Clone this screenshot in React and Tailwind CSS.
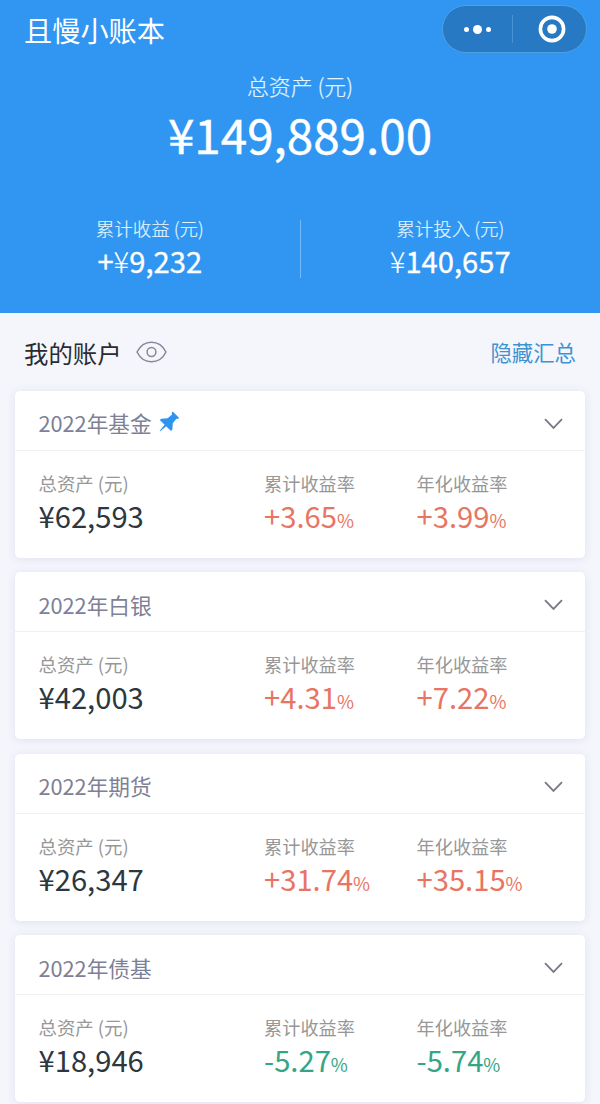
const accounts = [
    { name: "2022年基金", pinned: true, total: "¥62,593", profit: "+3.65", yearly: "+3.99" },
    { name: "2022年白银", total: "¥42,003", profit: "+4.31", yearly: "+7.22" },
    { name: "2022年期货", total: "¥26,347", profit: "+31.74", yearly: "+35.15" },
    { name: "2022年债基", total: "¥18,946", profit: "-5.27", yearly: "-5.74" },
];

function Capsule () {
    return (
        <div className="mt-[5px] flex h-12 w-[145px] items-center rounded-full border border-[#4f9fe2] bg-[#2679c2]">
            <div className="flex flex-1 items-center justify-center gap-1">
                <span className="size-[5px] rounded-full bg-white"></span>
                <span className="size-[9px] rounded-full bg-white"></span>
                <span className="size-[5px] rounded-full bg-white"></span>
            </div>
            <div className="h-7 w-px bg-[#4a92d2]"></div>
            <div className="flex flex-1 items-center justify-center pl-1">
                <svg width="28" height="28" viewBox="0 0 28 28">
                    <circle cx="14" cy="14" r="11.6" fill="none" stroke="white" strokeWidth="3.6" />
                    <circle cx="14" cy="14" r="4.8" fill="white" />
                </svg>
            </div>
        </div>
    )
}

function Eye () {
    return (
        <svg className="ml-[14px]" width="31" height="24" viewBox="0 0 31 24" fill="none" stroke="#85869a" strokeWidth="1.5">
            <path d="M1 12C4 6 9.500 2.200 15.500 2.200S27 6 30 12C27 18 21.500 21.800 15.500 21.800S4 18 1 12Z" strokeLinejoin="round" />
            <circle cx="15.500" cy="12" r="4.400" />
        </svg>
    )
}

function Pin () {
    return (
        <svg className="mb-1 ml-[7px]" width="21" height="21" viewBox="0 0 21 21" fill="#2f94f0">
            <path d="M13.700 0.600L20.200 7L18.700 8.100L17.400 7.800L13.800 12.200L13.400 18.200L12 20L7.200 15.300L1.200 20.200L0.700 19.700L5.600 13.700L0.800 9.100L2.300 7.700L8.600 7.200L13.100 3.500L12.700 1.800Z" />
        </svg>
    )
}

function Rate ({ label, value }) {
    return (
        <div>
            <p className="text-[18.2px] leading-[26px] text-[#979797]">{label}</p>
            <p className={`text-[29.2px] leading-[38px] ${value[0] === "-" ? "text-[#35a584]" : "text-[#e87563]"}`}>
                {value}<span className="text-[18.5px]">%</span>
            </p>
        </div>
    )
}

function AccountCard ({ account }) {
    return (
        <div className="h-[167px] shrink-0 rounded-[5px] bg-white shadow-[0_1px_8px_rgba(100,110,200,0.16)]">
            <div className="flex h-[60px] items-center border-b border-[#f1f1f4] pt-[7px] pr-[22px] pl-[23.5px]">
                <h3 className="text-[21.7px] text-[#7e8096]">{account.name}</h3>
                {account.pinned && <Pin />}
                <svg className="ml-auto" width="19" height="12" viewBox="0 0 19 12" fill="none" stroke="#777985" strokeWidth="1.8">
                    <path d="M1 1.200L9.500 10L18 1.200" />
                </svg>
            </div>
            <div className="grid grid-cols-[225.5px_152.5px_1fr] pt-[19px] pl-[23.5px]">
                <div>
                    <p className="text-[18.4px] leading-[26px] text-[#979797]">总资产 (元)</p>
                    <p className="text-[29.2px] leading-[38px] text-[#2d3740]">{account.total}</p>
                </div>
                <Rate label="累计收益率" value={account.profit} />
                <Rate label="年化收益率" value={account.yearly} />
            </div>
        </div>
    )
}

function App () {

    return (
        <div className="flex h-[1104px] w-[600px] flex-col overflow-hidden bg-[#f5f6fb] font-['Noto_Sans_CJK_SC',sans-serif]">

            <header className="h-[313px] shrink-0 bg-[#3096f2] text-white">
                <div className="flex h-[70px] justify-between pr-[13px] pl-6">
                    <h1 className="pt-[9px] text-[28.2px] leading-[42px]">且慢小账本</h1>
                    <Capsule />
                </div>

                <div className="text-center">
                    <p className="text-[21.9px] leading-8 font-light text-[#e3f6ff] [-webkit-text-stroke:0.2px]">总资产 (元)</p>
                    <p className="text-[47.6px] leading-[64px] [-webkit-text-stroke:0.4px]">¥149,889.00</p>
                </div>

                <div className="mt-[49px] flex text-center">
                    <div className="flex-1">
                        <p className="text-[18.5px] leading-[26px] font-light text-[#e3f6ff] [-webkit-text-stroke:0.15px]">累计收益 (元)</p>
                        <p className="text-[29.2px] leading-[38px] [-webkit-text-stroke:0.3px]">+<span className="font-light [-webkit-text-stroke:0]">¥</span>9,232</p>
                    </div>
                    <div className="mt-[5px] h-[58px] w-px bg-[#75bafa]"></div>
                    <div className="flex-1">
                        <p className="text-[18.5px] leading-[26px] font-light text-[#e3f6ff] [-webkit-text-stroke:0.15px]">累计投入 (元)</p>
                        <p className="text-[29.2px] leading-[38px] [-webkit-text-stroke:0.3px]"><span className="font-light [-webkit-text-stroke:0]">¥</span>140,657</p>
                    </div>
                </div>
            </header>

            <div className="flex h-[77.500px] shrink-0 items-center px-6">
                <h2 className="pt-[3px] text-[24.400px] text-[#292b30]">我的账户</h2>
                <Eye />
                <button className="ml-auto text-[21.4px] text-[#3c93d3]">隐藏汇总</button>
            </div>

            <div className="flex flex-col gap-[14.6px] px-[15px]">
                {accounts.map((account) => (
                    <AccountCard key={account.name} account={account} />
                ))}
            </div>

        </div>
    )
}

export default App;
